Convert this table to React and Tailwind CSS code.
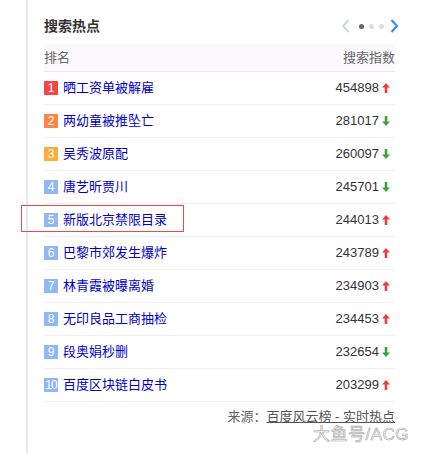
const rows = [
  { n: 1, t: '晒工资单被解雇', v: '454898', up: true },
  { n: 2, t: '两幼童被推坠亡', v: '281017', up: false },
  { n: 3, t: '吴秀波原配', v: '260097', up: false },
  { n: 4, t: '唐艺昕贾川', v: '245701', up: false },
  { n: 5, t: '新版北京禁限目录', v: '244013', up: true },
  { n: 6, t: '巴黎市郊发生爆炸', v: '243789', up: true },
  { n: 7, t: '林青霞被曝离婚', v: '234903', up: true },
  { n: 8, t: '无印良品工商抽检', v: '234453', up: true },
  { n: 9, t: '段奥娟秒删', v: '232654', up: false },
  { n: 10, t: '百度区块链白皮书', v: '203299', up: true },
]

const badge = ['bg-[#f54545]', 'bg-[#ff8547]', 'bg-[#ffac38]']

function Arrow({ up }) {
  return up ? (
    <svg width="8" height="10" viewBox="0 0 8 10" className="ml-[3px]">
      <path d="M4 0 L8 4.5 H5.3 V10 H2.7 V4.5 H0 Z" fill="#f33b3b" />
    </svg>
  ) : (
    <svg width="8" height="10" viewBox="0 0 8 10" className="ml-[3px]">
      <path d="M4 10 L8 5.5 H5.3 V0 H2.7 V5.5 H0 Z" fill="#3ca33c" />
    </svg>
  )
}

// red marker drawn around row 5
function Highlight() {
  return <div className="absolute left-[-23px] top-[1px] w-[163px] h-[27px] ring-1 ring-inset ring-[#f04848]" />
}

export default function App() {
  return (
    <div className="w-[426px] h-[453px] bg-white relative overflow-hidden font-['Liberation_Sans','Noto_Sans_CJK_SC',sans-serif]">
      <div className="flex h-full">
        <div className="w-[28px] shrink-0 border-r-2 border-[#e8e8e8]" />
        <div className="w-[351px] ml-[16px] flex flex-col">
          {/* title + pager */}
          <div className="h-[44px] flex items-center justify-between pt-[8px]">
            <span className="text-[14px] font-bold text-[#333] leading-none">搜索热点</span>
            <div className="flex items-center mr-[-4px]">
              <svg width="9" height="14" viewBox="0 0 9 14">
                <path d="M7.5 1 L2 7 L7.5 13" fill="none" stroke="#c2dde6" strokeWidth="2" />
              </svg>
              <span className="w-[5px] h-[5px] rounded-full bg-[#666] ml-[9px]" />
              <span className="w-[5px] h-[5px] rounded-full bg-[#ddd] ml-[5px]" />
              <span className="w-[5px] h-[5px] rounded-full bg-[#ddd] ml-[5px]" />
              <svg width="9" height="14" viewBox="0 0 9 14" className="ml-[6px]">
                <path d="M1.5 1 L7 7 L1.5 13" fill="none" stroke="#3388ff" strokeWidth="2" />
              </svg>
            </div>
          </div>
          {/* header */}
          <div className="h-[28px] bg-[#fbf9fe] border-b border-[#ececec] flex items-center justify-between text-[13px] text-[#666]">
            <span>排名</span>
            <span>搜索指数</span>
          </div>
          {rows.map((r) => (
            <div key={r.n} className="h-[33px] border-b border-[#f0f0f0] flex items-center justify-between relative">
              {r.n === 5 && <Highlight />}
              <div className="flex items-center">
                <span className={`w-[14px] h-[14px] flex items-center justify-center text-white text-[12px] leading-none ${badge[r.n - 1] || 'bg-[#8eb9f5]'} ${r.n === 10 ? 'tracking-[-1px]' : ''}`}>
                  {r.n}
                </span>
                <span className="ml-[5px] text-[13px] text-[#0000cc]">{r.t}</span>
              </div>
              <div className="flex items-center mr-[5px]">
                <span className="text-[13px] text-[#333]">{r.v}</span>
                <Arrow up={r.up} />
              </div>
            </div>
          ))}
          <div className="text-right text-[13px] text-[#666] mt-[5px]">
            来源：<span className="underline text-[#555]">百度风云榜 - 实时热点</span>
          </div>
        </div>
      </div>
      <div
        className="absolute left-[313px] top-[422px] text-[17px] text-white tracking-[0.5px]"
        style={{ WebkitTextStroke: '0.6px #a0a0a0' }}
      >
        大鱼号/ACG
      </div>
    </div>
  )
}
